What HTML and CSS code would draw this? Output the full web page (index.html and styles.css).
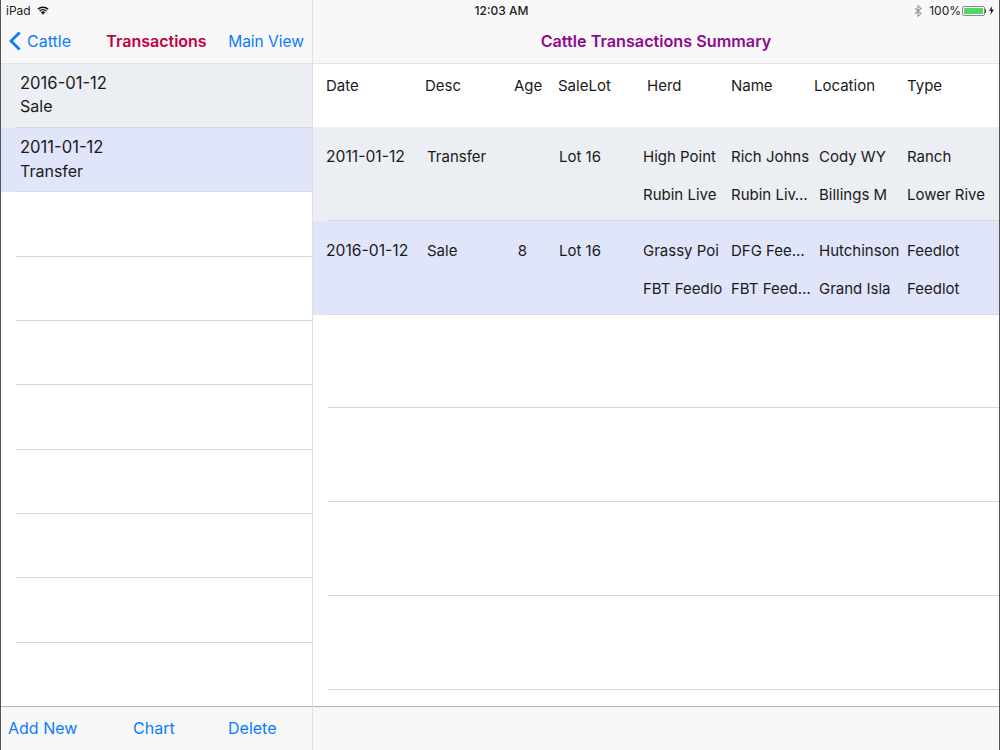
FILE: index.html
```html
<!DOCTYPE html>
<html lang="en">
<head>
<meta charset="utf-8">
<title>Cattle Transactions</title>
<link rel="stylesheet" href="styles.css">
</head>
<body>
<div class="app">
  <div class="status">
    <div class="status-left">
      <span>iPad</span>
      <svg class="wifi" width="12" height="9" viewBox="0 0 14 10"><path d="M1 3.6a8.6 8.6 0 0 1 12 0M3 5.7a5.7 5.7 0 0 1 8 0M5 7.6a2.9 2.9 0 0 1 4 0" fill="none" stroke="#111" stroke-width="1.7"/><path d="M7 10l-1.4-1.6a2 2 0 0 1 2.8 0z" fill="#111"/></svg>
    </div>
    <div class="status-time">12:03 AM</div>
    <div class="status-right">
      <svg class="bt" width="8" height="12" viewBox="0 0 9 14"><path d="M1 3.8l7 6.2-3.5 3V1l3.5 3-7 6.2" fill="none" stroke="#9a9a9a" stroke-width="1.3"/></svg>
      <span>100%</span>
      <span class="battery"><span class="battery-fill"></span></span><span class="battery-cap"></span>
      <svg class="bolt" width="5" height="9" viewBox="0 0 5 9"><path d="M3.2 0L0 5h2L1.4 9 5 3.6H2.8z" fill="#222"/></svg>
    </div>
  </div>

  <section class="master">
    <header class="nav">
      <a class="nav-back">
        <svg width="13" height="20" viewBox="0 0 13 20"><path d="M10.6 1.5L2 10l8.6 8.5" fill="none" stroke="#0a7cff" stroke-width="2.8"/></svg>
        <span>Cattle</span>
      </a>
      <h1 class="nav-title crimson">Transactions</h1>
      <a class="link nav-link">Main View</a>
    </header>
    <div class="list">
      <div class="item tint-grey"><div class="item-inner"><div class="item-date">2016-01-12</div><div>Sale</div></div></div>
      <div class="item tint-blue"><div class="item-inner"><div class="item-date">2011-01-12</div><div>Transfer</div></div></div>
      <div class="item"><div class="item-inner"></div></div>
      <div class="item"><div class="item-inner"></div></div>
      <div class="item"><div class="item-inner"></div></div>
      <div class="item"><div class="item-inner"></div></div>
      <div class="item"><div class="item-inner"></div></div>
      <div class="item"><div class="item-inner"></div></div>
      <div class="item"><div class="item-inner"></div></div>
      <div class="item"><div class="item-inner"></div></div>
    </div>
    <footer class="toolbar">
      <a class="link">Add New</a>
      <a class="link">Chart</a>
      <a class="link">Delete</a>
    </footer>
  </section>

  <section class="detail">
    <header class="nav nav-center">
      <h1 class="nav-title purple">Cattle Transactions Summary</h1>
    </header>
    <div class="thead">
      <span class="h-date">Date</span><span class="h-desc">Desc</span><span class="h-age">Age</span><span class="h-lot">SaleLot</span><span class="h-herd">Herd</span><span class="h-name">Name</span><span class="h-loc">Location</span><span class="h-type">Type</span>
    </div>
    <div class="tbody">
      <div class="trow tint-grey">
        <div class="trow-inner">
          <div class="cells">
            <span class="c-date">2011-01-12</span><span>Transfer</span><span class="c-age"></span><span class="c-lot">Lot 16</span>
            <span>High Point</span><span>Rich Johns</span><span>Cody WY</span><span>Ranch</span>
            <span class="c-skip"></span>
            <span>Rubin Live</span><span>Rubin Liv…</span><span>Billings M</span><span>Lower Rive</span>
          </div>
        </div>
      </div>
      <div class="trow tint-blue">
        <div class="trow-inner">
          <div class="cells">
            <span class="c-date">2016-01-12</span><span>Sale</span><span class="c-age">8</span><span class="c-lot">Lot 16</span>
            <span>Grassy Poi</span><span>DFG Fee…</span><span>Hutchinson</span><span>Feedlot</span>
            <span class="c-skip"></span>
            <span>FBT Feedlo</span><span>FBT Feed…</span><span>Grand Isla</span><span>Feedlot</span>
          </div>
        </div>
      </div>
      <div class="trow"><div class="trow-inner"></div></div>
      <div class="trow"><div class="trow-inner"></div></div>
      <div class="trow"><div class="trow-inner"></div></div>
      <div class="trow"><div class="trow-inner"></div></div>
    </div>
    <footer class="toolbar"></footer>
  </section>
</div>
</body>
</html>
```
FILE: styles.css
```css
* { box-sizing: border-box; }
html, body { margin: 0; padding: 0; }
body {
  width: 1000px;
  height: 750px;
  overflow: hidden;
  background: #fff;
  font-family: Inter, "Liberation Sans", sans-serif;
  font-size: 16px;
  color: #1a1a1a;
}
a { color: #0a7cff; }
.app {
  position: relative;
  display: flex;
  width: 1000px;
  height: 750px;
  border-left: 1px solid #555;
  border-right: 1px solid #555;
}
.status {
  position: absolute;
  top: 0;
  left: 0;
  right: 0;
  height: 20px;
  padding-top: 1px;
  display: grid;
  grid-template-columns: 1fr auto 1fr;
  align-items: center;
  font-size: 12px;
  color: #222;
}
.status-left { display: flex; align-items: center; gap: 6px; padding-left: 5px; }
.status-time { font-weight: 500; padding-left: 3px; }
.status-right { display: flex; align-items: center; justify-content: flex-end; padding-right: 5px; }
.bt { margin-right: 7px; }
.battery {
  display: block;
  width: 23px;
  height: 10px;
  margin-left: 1px;
  padding: 1px;
  border: 1px solid #8a8a8a;
  border-radius: 2px;
}
.battery-fill { display: block; height: 100%; background: #4cd964; }
.battery-cap { display: block; width: 1px; height: 4px; background: #555; margin-right: 3px; }

.master {
  flex: none;
  width: 312px;
  display: flex;
  flex-direction: column;
  border-right: 1px solid #e0e0e0;
}
.detail {
  flex: 1;
  min-width: 0;
  display: flex;
  flex-direction: column;
}
.nav {
  flex: none;
  height: 63.5px;
  padding: 19px 8px 0 8px;
  display: grid;
  grid-template-columns: 1fr auto 1fr;
  align-items: center;
  background: #f8f8f8;
  border-bottom: 1px solid #e4e4e4;
}
.nav > .link { justify-self: end; }
.nav-center { grid-template-columns: 1fr; }
.nav-center .nav-title { text-align: center; font-size: 16.2px; }
.nav-back { display: flex; align-items: center; gap: 5px; }
.nav-link { font-size: 15.5px; padding-top: 1px; }
.nav-title {
  margin: 0;
  font-size: 16px;
  font-weight: 600;
  line-height: 20px;
}
.crimson { color: #c2003f; }
.purple { color: #8e0a8e; }
.link { display: block; }

.list { flex: 1; min-height: 0; overflow: hidden; }
.item { height: 64.35px; }
.item-inner {
  height: 100%;
  margin-left: 15px;
  padding: 8.25px 0 0 4px;
  border-bottom: 1px solid #d9d9d9;
  line-height: 23.5px;
}
.item-date { font-size: 16.6px; }
.tint-grey { background: #ebeef3; }
.tint-blue { background: #e0e5fa; }

.toolbar {
  flex: none;
  height: 44px;
  padding-bottom: 1px;
  display: flex;
  align-items: center;
  background: #f8f8f8;
  border-top: 1px solid #b4b4b4;
}
.master .toolbar { padding-left: 7px; }
.master .toolbar .link:nth-child(1) { width: 125px; }
.master .toolbar .link:nth-child(2) { width: 95px; }

.thead {
  flex: none;
  height: 63.5px;
  display: flex;
  padding: 10.5px 0 0 13px;
  line-height: 24px;
  font-size: 15px;
}
.h-date { width: 99px; }
.h-desc { width: 89px; }
.h-age { width: 44px; }
.h-lot { width: 89px; }
.h-herd { width: 84px; }
.h-name { width: 83px; }
.h-loc { width: 93px; }

.tbody { flex: 1; min-height: 0; overflow: hidden; }
.trow { height: 93.75px; }
.trow-inner {
  height: 100%;
  margin-left: 15px;
  border-bottom: 1px solid #d9d9d9;
}
.cells {
  display: grid;
  grid-template-columns: 101px 87px 17px 28px 84px 88px 88px 88px 76px;
  grid-auto-rows: 38px;
  margin-left: -2px;
  padding-top: 11px;
  line-height: 38px;
  font-size: 15px;
}
.cells > span { white-space: nowrap; }
.c-date { font-size: 15.7px; }
.c-age { text-align: center; }
.c-lot { grid-column: 5; }
.c-skip { grid-column: 1 / span 5; }
```
